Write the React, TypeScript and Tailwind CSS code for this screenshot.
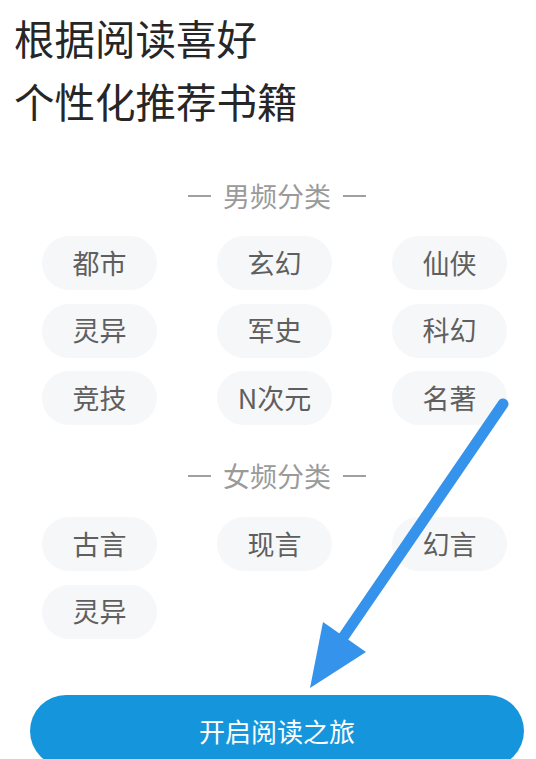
const male = ["都市", "玄幻", "仙侠", "灵异", "军史", "科幻", "竞技", "N次元", "名著"];
const female = ["古言", "现言", "幻言", "灵异"];

function Pill({ label }: { label: string }) {
  return (
    <div className="flex h-[54px] w-[115px] items-center justify-center rounded-full bg-[#f6f7f9] text-[27px] text-[#5f5f5f]">
      {label}
    </div>
  );
}

function SectionTitle({ label }: { label: string }) {
  return (
    <div className="flex items-center justify-center gap-[12px] pl-[18px] text-[27px] leading-[36px] text-[#9a9a9a]">
      <span className="h-[2px] w-[23px] bg-[#a0a0a0]" />
      <span>{label}</span>
      <span className="h-[2px] w-[23px] bg-[#a0a0a0]" />
    </div>
  );
}

function PillGrid({ items }: { items: string[] }) {
  return (
    <div className="grid grid-cols-[115px_115px_115px] justify-between gap-y-[13.5px] pl-[42px] pr-[29px]">
      {items.map((item, i) => (
        <Pill key={i} label={item} />
      ))}
    </div>
  );
}

export default function App() {
  return (
    <div
      className="relative h-[759px] overflow-hidden bg-white"
      style={{ fontFamily: '"Noto Sans CJK SC", "Noto Sans", sans-serif' }}
    >
      <h1 className="pl-[14px] pt-[6px] text-[40.5px] font-normal leading-[63px] text-[#262626]">
        根据阅读喜好
        <br />
        个性化推荐书籍
      </h1>

      <div className="mt-[46px]">
        <SectionTitle label="男频分类" />
      </div>
      <div className="mt-[22px]">
        <PillGrid items={male} />
      </div>

      <div className="mt-[33px]">
        <SectionTitle label="女频分类" />
      </div>
      <div className="mt-[23px]">
        <PillGrid items={female} />
      </div>

      <div className="mt-[56px] pl-[30px]">
        <button className="flex h-[72px] w-[494px] items-center justify-center rounded-full bg-[#1596dc] text-[26px] text-white">
          开启阅读之旅
        </button>
      </div>

      {/* annotation arrow */}
      <svg
        className="pointer-events-none absolute inset-0"
        width="536"
        height="759"
        viewBox="0 0 536 759"
      >
        <line
          x1="503"
          y1="404"
          x2="340"
          y2="642"
          stroke="#3693ec"
          strokeWidth="11"
          strokeLinecap="round"
        />
        <polygon points="310,688 323,622 366,652" fill="#3693ec" />
      </svg>
    </div>
  );
}
